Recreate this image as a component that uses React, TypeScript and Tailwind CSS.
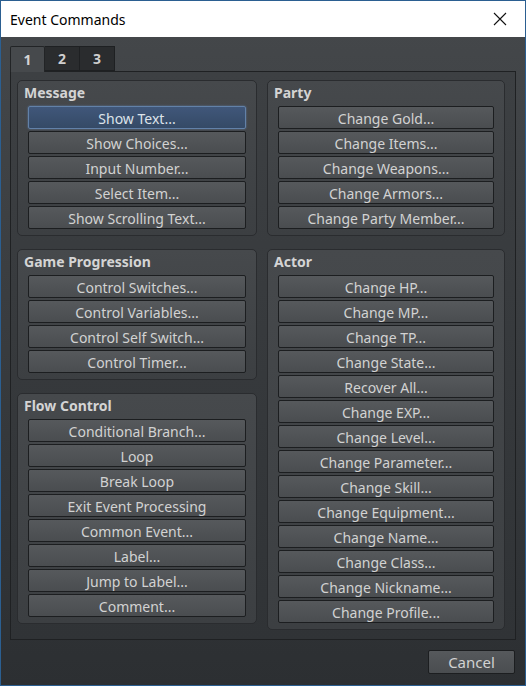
// Event Commands dialog — page 1 of the command picker.

const MESSAGE = ["Show Text...", "Show Choices...", "Input Number...", "Select Item...", "Show Scrolling Text..."];
const PARTY = ["Change Gold...", "Change Items...", "Change Weapons...", "Change Armors...", "Change Party Member..."];
const PROGRESS = ["Control Switches...", "Control Variables...", "Control Self Switch...", "Control Timer..."];
const FLOW = ["Conditional Branch...", "Loop", "Break Loop", "Exit Event Processing", "Common Event...", "Label...", "Jump to Label...", "Comment..."];
const ACTOR = [
  "Change HP...", "Change MP...", "Change TP...", "Change State...", "Recover All...", "Change EXP...",
  "Change Level...", "Change Parameter...", "Change Skill...", "Change Equipment...", "Change Name...",
  "Change Class...", "Change Nickname...", "Change Profile...",
];

function CmdButton({ label, selected }: { label: string; selected?: boolean }) {
  return (
    <button
      className={
        selected
          ? "h-[23px] w-full rounded-[2px] border border-[#6281a8] bg-gradient-to-b from-[#40577a] to-[#354a66] pt-[2px] text-[14px] leading-none text-[#dde3ea] shadow-[0_0_2px_#5f7fa8]"
          : "h-[23px] w-full rounded-[2px] border border-[#1c1e20] bg-gradient-to-b from-[#56595c] to-[#4a4d50] pt-[2px] text-[14px] leading-none text-[#d2d2d2]"
      }
    >
      {label}
    </button>
  );
}

function Group({ title, items, selected }: { title: string; items: string[]; selected?: string }) {
  return (
    <section className="rounded-[5px] border border-[#2a2c2f] bg-gradient-to-b from-[#46494c] to-[#3c3f42] px-[10px] pb-[6px] pt-[3px]">
      <h2 className="-ml-[4px] mb-[4px] text-[14px] font-bold leading-[18px] text-[#d4d4d4]">{title}</h2>
      <div className="flex flex-col gap-[2px]">
        {items.map((i) => (
          <CmdButton key={i} label={i} selected={i === selected} />
        ))}
      </div>
    </section>
  );
}

export default function App() {
  return (
    <div
      className="flex h-[686px] w-[526px] flex-col border border-t-0 border-[#2b5f91] bg-gradient-to-b from-[#45484b] to-[#2c2f32]"
      style={{ fontFamily: '"Noto Sans", "Open Sans", sans-serif' }}
    >
      <header className="flex h-[37px] shrink-0 items-center justify-between border-t border-[#2b5f91] bg-white pl-[9px] pr-[16px]">
        <span className="text-[14px] text-black">Event Commands</span>
        <svg width="16" height="16" viewBox="0 0 16 16" className="mr-[1px]">
          <path d="M2 2 L14 14 M14 2 L2 14" stroke="#111" strokeWidth="1.1" />
        </svg>
      </header>

      <div className="flex flex-1 flex-col px-[9px] pt-[9px]">
        <div className="flex h-[25px]">
          <div className="z-10 -mb-px flex w-[35px] items-center justify-center rounded-t-[2px] border border-b-0 border-[#222426] bg-[#46494c] text-[14px] font-bold text-[#d4d4d4]">1</div>
          <div className="flex w-[35px] items-center justify-center border border-l-0 border-[#1e2022] bg-[#2a2c2e] text-[14px] font-bold text-[#cfcfcf]">2</div>
          <div className="flex w-[35px] items-center justify-center border border-l-0 border-[#1e2022] bg-[#2a2c2e] text-[14px] font-bold text-[#cfcfcf]">3</div>
        </div>

        <div className="flex h-[569px] gap-[10px] border border-[#1f2123] bg-gradient-to-b from-[#3d4043] to-[#303336] pl-[6px] pr-[10px] pt-[8px]">
          <div className="flex w-[240px] flex-col gap-[13px]">
            <Group title="Message" items={MESSAGE} selected="Show Text..." />
            <Group title="Game Progression" items={PROGRESS} />
            <Group title="Flow Control" items={FLOW} />
          </div>
          <div className="flex flex-1 flex-col gap-[13px]">
            <Group title="Party" items={PARTY} />
            <Group title="Actor" items={ACTOR} />
          </div>
        </div>

        <div className="flex justify-end pr-[1px] pt-[10px]">
          <button className="h-[24px] w-[87px] rounded-[2px] border border-[#1c1e20] bg-gradient-to-b from-[#56595c] to-[#4a4d50] pt-px text-[15px] leading-none text-[#d2d2d2]">
            Cancel
          </button>
        </div>
      </div>
    </div>
  );
}
